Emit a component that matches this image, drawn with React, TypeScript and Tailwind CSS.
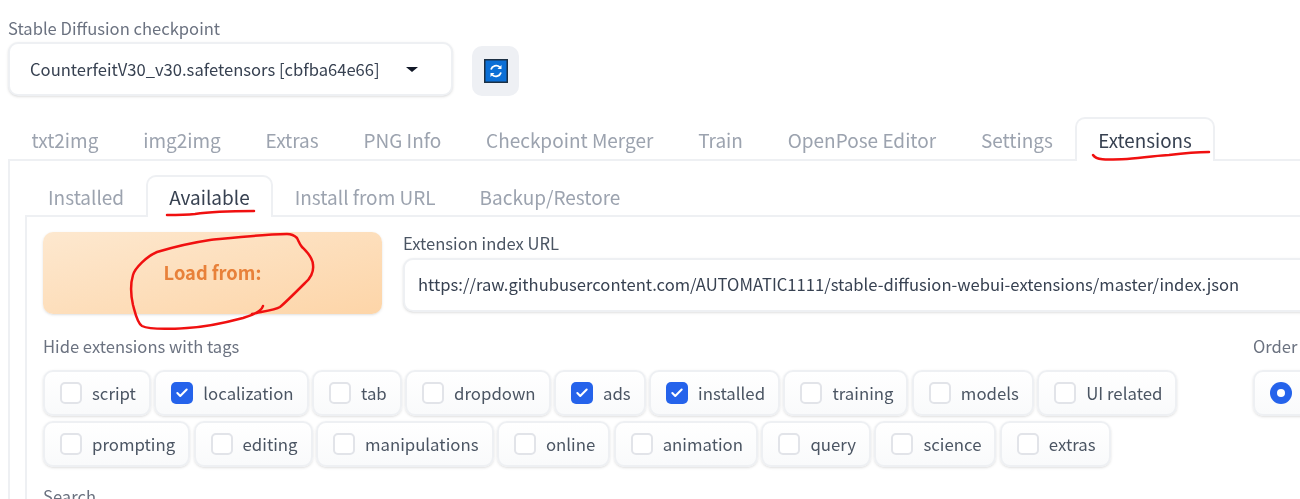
import { Check } from 'lucide-react';

const mainTabs = ['txt2img', 'img2img', 'Extras', 'PNG Info', 'Checkpoint Merger', 'Train', 'OpenPose Editor', 'Settings'];
const subTabs = ['Installed', 'Available', 'Install from URL', 'Backup/Restore'];
const tagsChecked: Record<string, boolean> = { localization: true, ads: true, installed: true };
const tags = [
  'script', 'localization', 'tab', 'dropdown', 'ads', 'installed', 'training', 'models', 'UI related',
  'prompting', 'editing', 'manipulations', 'online', 'animation', 'query', 'science', 'extras',
];

function TagChip({ label }: { label: string }) {
  const checked = tagsChecked[label];
  return (
    <div className="flex h-[46px] items-center gap-[10px] rounded-[10px] border-2 border-[#eef0f3] bg-gradient-to-b from-white to-[#f9fafb] pl-[15px] pr-[13px] text-[16.8px] leading-[24px] text-[#4b5563] shadow-sm">
      {checked ? (
        <span className="flex h-[22px] w-[22px] items-center justify-center rounded-[5px] bg-[#2563eb]">
          <Check size={14} strokeWidth={3.5} className="text-white" />
        </span>
      ) : (
        <span className="h-[22px] w-[22px] rounded-[5px] border-2 border-[#e2e4e9] bg-white" />
      )}
      <span>{label}</span>
    </div>
  );
}

export default function App() {
  return (
    <div className="relative h-[499px] w-[1300px] overflow-hidden bg-white pl-2 pt-[17px] font-['Noto_Sans_CJK_SC','Noto_Sans',sans-serif] blur-[0.7px]">
      <div className="text-[16.6px] leading-[22px] text-[#6b7280]">Stable Diffusion checkpoint</div>

      <div className="mt-[3px] flex items-end gap-[19px]">
        <div className="flex h-[54px] w-[445px] items-center justify-between rounded-[10px] border-2 border-[#eef0f3] bg-white pl-[20px] pr-[33px] text-[16.6px] text-[#374151] shadow-sm">
          <span>CounterfeitV30_v30.safetensors [cbfba64e66]</span>
          <span className="h-0 w-0 border-x-[6px] border-t-[5px] border-x-transparent border-t-[#111827]" />
        </div>
        <button className="flex h-[50px] w-[47px] items-center justify-center rounded-[10px] bg-[#eef0f4]">
          <svg width="24" height="24" viewBox="0 0 24 24">
            <rect x="0.75" y="0.75" width="22.5" height="22.5" fill="#0b6fd6" stroke="#1c3044" strokeWidth="1.5" />
            <path d="M7 10.500a5.300 5.300 0 0 1 8.800-2.300" fill="none" stroke="#fff" strokeWidth="1.800" />
            <path d="M17 13.500a5.300 5.300 0 0 1-8.800 2.300" fill="none" stroke="#fff" strokeWidth="1.800" />
            <path d="M17.500 6v4h-4z M6.500 18v-4h4z" fill="#fff" />
          </svg>
        </button>
      </div>

      <div className="mt-[21px] flex h-[44px] w-[1400px] items-end border-b-2 border-[#eef0f3] pl-px">
        {mainTabs.map((t) => (
          <div key={t} className="px-[22.4px] pb-[6px] text-[19px] leading-[26px] text-[#9ca3af]">{t}</div>
        ))}
        <div className="relative -mb-[2px] rounded-t-[10px] border-2 border-b-0 border-[#eef0f3] bg-white px-[21px] pb-[8px] pt-[8px] text-[18.8px] leading-[26px] text-[#374151]">
          Extensions
        </div>
      </div>

      <div className="w-[1400px] border-l-2 border-[#eef0f3] pl-[15px] pt-[13px]">
        <div className="flex h-[43px] w-[1400px] items-end border-b-2 border-[#eef0f3] pl-px">
          {subTabs.map((t, i) =>
            i === 1 ? (
              <div key={t} className="-mb-[2px] rounded-t-[10px] border-2 border-b-0 border-[#eef0f3] bg-white px-[21px] pb-[7px] pt-[7px] text-[19px] leading-[26px] text-[#374151]">{t}</div>
            ) : (
              <div key={t} className="px-[22px] pb-[5px] text-[19px] leading-[26px] text-[#9ca3af]">{t}</div>
            ),
          )}
        </div>

        <div className="w-[1400px] border-l-2 border-[#eef0f3] pl-[16px] pt-[14px]">
          <div className="flex gap-[21px]">
            <button className="mt-px flex h-[82px] w-[339px] items-center justify-center rounded-[10px] bg-gradient-to-br from-[#fde8cf] to-[#fdd5a8] text-[18.3px] font-semibold text-[#e8813a] shadow-sm">
              Load from:
            </button>
            <div className="flex-1">
              <div className="text-[16.6px] leading-[24px] text-[#4b5563]">Extension index URL</div>
              <div className="mt-[3px] flex h-[54px] items-center rounded-[10px] border-2 border-[#eef0f3] bg-white pb-px pl-[13px] text-[16.6px] text-[#374151] shadow-sm">
                https://raw.githubusercontent.com/AUTOMATIC1111/stable-diffusion-webui-extensions/master/index.json
              </div>
            </div>
          </div>

          <div className="mt-[20px] flex">
            <div className="w-[1210px] shrink-0">
              <div className="text-[16.6px] leading-[24px] text-[#6b7280]">Hide extensions with tags</div>
              <div className="mt-[12px] flex flex-wrap gap-x-[3.4px] gap-y-[5px]">
                {tags.map((t) => (
                  <TagChip key={t} label={t} />
                ))}
              </div>
            </div>
            <div>
              <div className="text-[16.6px] leading-[24px] text-[#6b7280]">Order</div>
              <div className="mt-[12px] flex h-[46px] w-[200px] items-center rounded-[10px] border-2 border-[#eef0f3] bg-gradient-to-b from-white to-[#f9fafb] pl-[15px] shadow-sm">
                <span className="flex h-[22px] w-[22px] items-center justify-center rounded-full bg-[#2563eb]">
                  <span className="h-[8px] w-[8px] rounded-full bg-white" />
                </span>
              </div>
            </div>
          </div>

          <div className="mt-[17px] text-[16.6px] leading-[24px] text-[#6b7280]">Search</div>
        </div>
      </div>

      {/* red marker annotations drawn over the screenshot */}
      <svg className="absolute left-0 top-0" width="1300" height="499" viewBox="0 0 1300 499" fill="none" stroke="#f01010" strokeWidth="2.5" strokeLinecap="round" strokeLinejoin="round">
        <path d="M1093 155C1096 160 1104 160 1127 159C1145 158 1160 155 1169 155C1185 153 1198 152 1209 152" />
        <path d="M167 215C175 215 185 215 195 214C208 212 222 211 254 211" />
        <path d="M263 306C262 310 256 314 243 318C228 322 207 327 187 328C172 329 150 330 142 326C137 323 135 312 133 305C131 296 130 285 133 275C135 268 147 256 157 252C167 249 190 243 210 240C230 238 265 234 287 234C293 234 296 237 297 238C299 242 300 245 302 247C306 251 313 257 313 265C314 272 310 279 305 283C300 288 285 303 280 307C275 310 260 312 252 314" />
      </svg>
    </div>
  );
}
